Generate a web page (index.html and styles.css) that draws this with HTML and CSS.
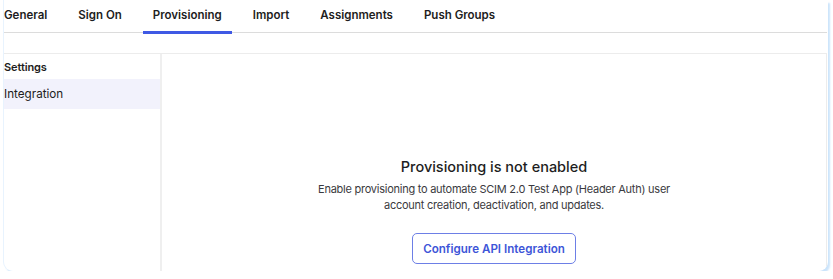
FILE: index.html
```html
<!DOCTYPE html>
<html lang="en">
<head>
	<meta charset="UTF-8">
	<title>Provisioning</title>
	<link rel="stylesheet" href="styles.css">
</head>
<body>

<div class="card">
	<nav class="tabs">
		<a class="tab">General</a>
		<a class="tab">Sign On</a>
		<a class="tab active">Provisioning</a>
		<a class="tab">Import</a>
		<a class="tab">Assignments</a>
		<a class="tab">Push Groups</a>
	</nav>

	<div class="panel">
		<aside class="side">
			<div class="side-title">Settings</div>
			<div class="side-item selected">Integration</div>
		</aside>
		<main class="main">
			<h2 class="empty-title">Provisioning is not enabled</h2>
			<p class="empty-text">Enable provisioning to automate SCIM 2.0 Test App (Header Auth) user account creation, deactivation, and updates.</p>
			<button class="btn-outline">Configure API Integration</button>
		</main>
	</div>
</div>

</body>
</html>
```

FILE: styles.css
```css
:root {
	--color-text: #1d1d21;
	--color-text-soft: #3a3a40;
	--color-line: #dcdcdc;
	--color-line-light: #ececec;
	--color-accent: #3f59e4;
	--color-selected: #f2f2fc;
	font-family: Inter, "Noto Sans", sans-serif;
}

body {
	margin: 0;
	background: #fff;
	color: var(--color-text);
}

.card {
	margin-left: 4px;
	width: 824px;
	height: 271px;
	background: #fff;
	border-radius: 0 0 9px 9px;
	box-shadow: -1px 0 0 #e8f3fe, 2px 3px 2px #cbe4fb;
	overflow: hidden;
	display: flex;
	flex-direction: column;
}

.tabs {
	display: flex;
	gap: 11px;
	height: 32px;
	margin-left: -10px;
	margin-right: 1px;
	border-bottom: 1px solid var(--color-line);
}

.tab {
	display: flex;
	align-items: center;
	padding: 0 10px 2px;
	font-size: 11.5px;
	font-weight: 600;
	color: var(--color-text);
	border-bottom: 3px solid transparent;
	margin-bottom: -2px;
}

.tab.active {
	border-bottom-color: var(--color-accent);
}

.panel {
	flex: 1;
	display: flex;
	margin-top: 20px;
	margin-right: 1px;
	border-top: 1px solid var(--color-line-light);
	border-right: 1px solid var(--color-line-light);
}

.side {
	width: 156px;
	border-right: 2px solid #efefef;
}

.side-title {
	height: 25px;
	display: flex;
	align-items: center;
	font-size: 11px;
	font-weight: 600;
	letter-spacing: -0.1px;
}

.side-item {
	height: 30px;
	display: flex;
	align-items: center;
	font-size: 11.7px;
}

.side-item.selected {
	background: var(--color-selected);
}

.main {
	flex: 1;
	display: flex;
	flex-direction: column;
	align-items: center;
	padding-top: 103px;
	text-align: center;
}

.empty-title {
	margin: 0;
	font-size: 14.5px;
	font-weight: 500;
	line-height: 20px;
}

.empty-text {
	margin: 4px 0 0;
	max-width: 372px;
	font-size: 11px;
	letter-spacing: -0.25px;
	line-height: 16px;
	color: var(--color-text-soft);
}

.btn-outline {
	margin-top: 20px;
	height: 31px;
	padding: 0 10px;
	font-family: inherit;
	font-size: 11.6px;
	font-weight: 600;
	color: #3d55d8;
	background: #fff;
	border: 1px solid #6d7fe6;
	border-radius: 5px;
}
```
